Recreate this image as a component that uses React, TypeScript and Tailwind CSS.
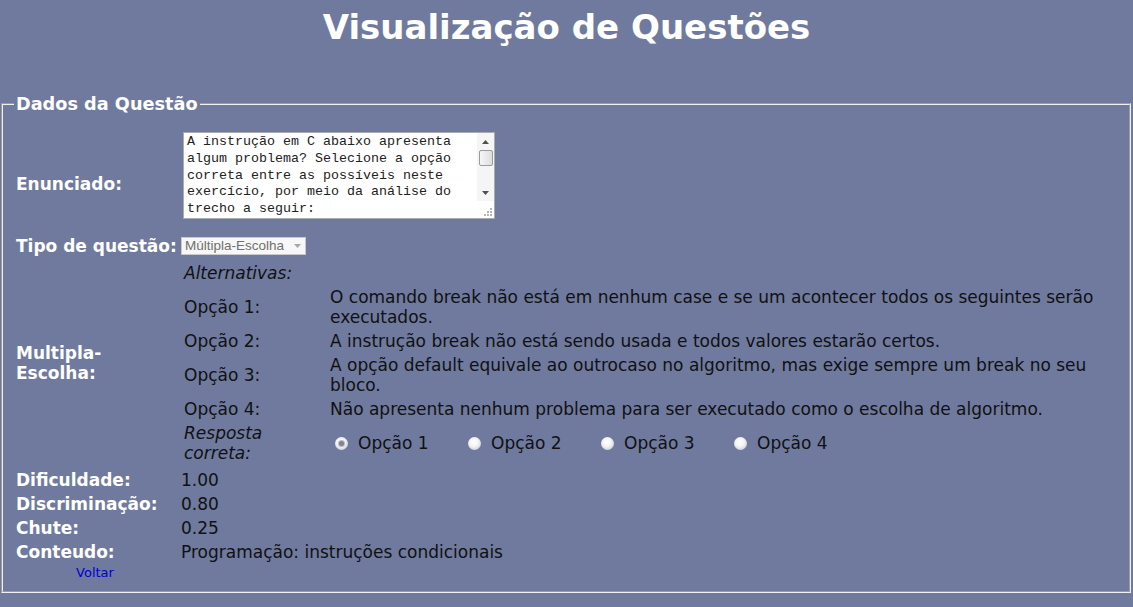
const opcoes = [
  "O comando break não está em nenhum case e se um acontecer todos os seguintes serão executados.",
  "A instrução break não está sendo usada e todos valores estarão certos.",
  "A opção default equivale ao outrocaso no algoritmo, mas exige sempre um break no seu bloco.",
  "Não apresenta nenhum problema para ser executado como o escolha de algoritmo.",
];

const dados = [
  { label: "Dificuldade:", valor: "1.00" },
  { label: "Discriminação:", valor: "0.80" },
  { label: "Chute:", valor: "0.25" },
  { label: "Conteudo:", valor: "Programação: instruções condicionais" },
];

function Radio({ checked }: { checked?: boolean }) {
  return (
    <span className="flex h-[13px] w-[13px] items-center justify-center rounded-full bg-[radial-gradient(circle_at_45%_40%,#ffffff_0%,#f4f4f4_40%,#cfd1d9_78%,#a3a8bb_100%)]">
      {checked && (
        <span className="h-[5px] w-[5px] rounded-full bg-[#80848f] shadow-[0_0_0_1px_#b9bcc6]" />
      )}
    </span>
  );
}

function Enunciado() {
  return (
    <div className="flex h-[87px] w-[312px] border border-[#a9abb3] bg-white">
      <div className="w-[293px] overflow-hidden pl-[3px] pr-[2px] pt-[1px] font-['Liberation_Mono',monospace] text-[13.33px] leading-[16.75px] text-[#222]">
        A instrução em C abaixo apresenta algum problema? Selecione a opção
        correta entre as possíveis neste exercício, por meio da análise do
        trecho a seguir:
      </div>
      <div className="flex w-[17px] flex-col bg-[#f5f5f5]">
        <div className="flex h-[17px] items-center justify-center">
          <svg width="7" height="4" viewBox="0 0 7 4">
            <path d="M0 4 L3.5 0 L7 4 Z" fill="#505050" />
          </svg>
        </div>
        <div className="mx-auto h-[16px] w-[14px] rounded-[2px] border border-[#9b9b9b] bg-[linear-gradient(90deg,#f6f6f6,#dedede)]" />
        <div className="flex-1" />
        <div className="flex h-[17px] items-center justify-center">
          <svg width="7" height="4" viewBox="0 0 7 4">
            <path d="M0 0 L7 0 L3.5 4 Z" fill="#505050" />
          </svg>
        </div>
        <div className="flex h-[17px] items-end justify-end bg-white pb-[2px] pr-[2px]">
          <svg width="8" height="8" viewBox="0 0 8 8">
            <rect x="6" y="0" width="2" height="2" fill="#b5b5b5" />
            <rect x="3" y="3" width="2" height="2" fill="#b5b5b5" />
            <rect x="6" y="3" width="2" height="2" fill="#b5b5b5" />
            <rect x="0" y="6" width="2" height="2" fill="#b5b5b5" />
            <rect x="3" y="6" width="2" height="2" fill="#b5b5b5" />
            <rect x="6" y="6" width="2" height="2" fill="#b5b5b5" />
          </svg>
        </div>
      </div>
    </div>
  );
}

export default function App() {
  return (
    <div className="min-h-[607px] bg-[#6f7a9e] pt-[7px] font-['DejaVu_Sans',sans-serif] text-[17px] text-[#111]">
      <h1 className="text-center text-[34px] font-bold leading-[40px] text-white">
        Visualização de Questões
      </h1>

      <fieldset className="ml-[1px] mr-[2px] mt-[47px] border-2 border-[#f0f0f0] pb-[11px] pl-[13px] pr-[6px] [border-style:groove]">
        <legend className="-ml-[2px] px-[2px] text-[17.7px] font-bold leading-[20px] text-white">
          Dados da Questão
        </legend>

        {/* Enunciado */}
        <div className="flex">
          <div className="w-[165px] pt-[60px] font-bold leading-[20px] text-white">
            Enunciado:
          </div>
          <div className="pl-[2px] pt-[18px]">
            <Enunciado />
          </div>
        </div>

        {/* Tipo de questão */}
        <div className="mt-[17px] flex items-center">
          <div className="w-[165px] whitespace-nowrap font-bold leading-[20px] text-white">
            Tipo de questão:
          </div>
          <div className="flex h-[18px] w-[125px] items-center justify-between border border-[#c8c9cf] bg-[#f7f7f7] pl-[3px] pr-[4px] font-['Liberation_Sans',sans-serif] text-[13.5px] text-[#707070]">
            <span>Múltipla-Escolha</span>
            <svg width="7" height="4" viewBox="0 0 7 4">
              <path d="M0 0 L7 0 L3.5 4 Z" fill="#a8a8a8" />
            </svg>
          </div>
        </div>

        {/* Multipla-Escolha */}
        <div className="mt-[7px] flex items-center">
          <div className="w-[165px] font-bold leading-[20px] text-white">
            Multipla-
            <br />
            Escolha:
          </div>
          <div className="flex flex-1 flex-col gap-[4px] pl-[3px] leading-[20px]">
            <div className="italic">Alternativas:</div>
            {opcoes.map((texto, i) => (
              <div key={i} className="flex items-center">
                <div className="w-[146px] shrink-0">Opção {i + 1}:</div>
                <div className="flex-1">{texto}</div>
              </div>
            ))}
            <div className="flex items-center">
              <div className="w-[146px] shrink-0 italic">
                Resposta
                <br />
                correta:
              </div>
              <div className="flex items-center">
                {[1, 2, 3, 4].map((n) => (
                  <label key={n} className="flex w-[133px] items-center pl-[5px]">
                    <Radio checked={n === 1} />
                    <span className="ml-[10px]">Opção {n}</span>
                  </label>
                ))}
              </div>
            </div>
          </div>
        </div>

        {/* Parâmetros */}
        <div className="mt-[7px] flex flex-col gap-[4px] leading-[20px]">
          {dados.map((d) => (
            <div key={d.label} className="flex">
              <div className="w-[165px] whitespace-nowrap font-bold text-white">
                {d.label}
              </div>
              <div>{d.valor}</div>
            </div>
          ))}
        </div>

        <div className="mt-[3px] w-[158px] text-center text-[13px] leading-[15px]">
          <a href="#" className="text-[#0000cc]">
            Voltar
          </a>
        </div>
      </fieldset>
    </div>
  );
}
